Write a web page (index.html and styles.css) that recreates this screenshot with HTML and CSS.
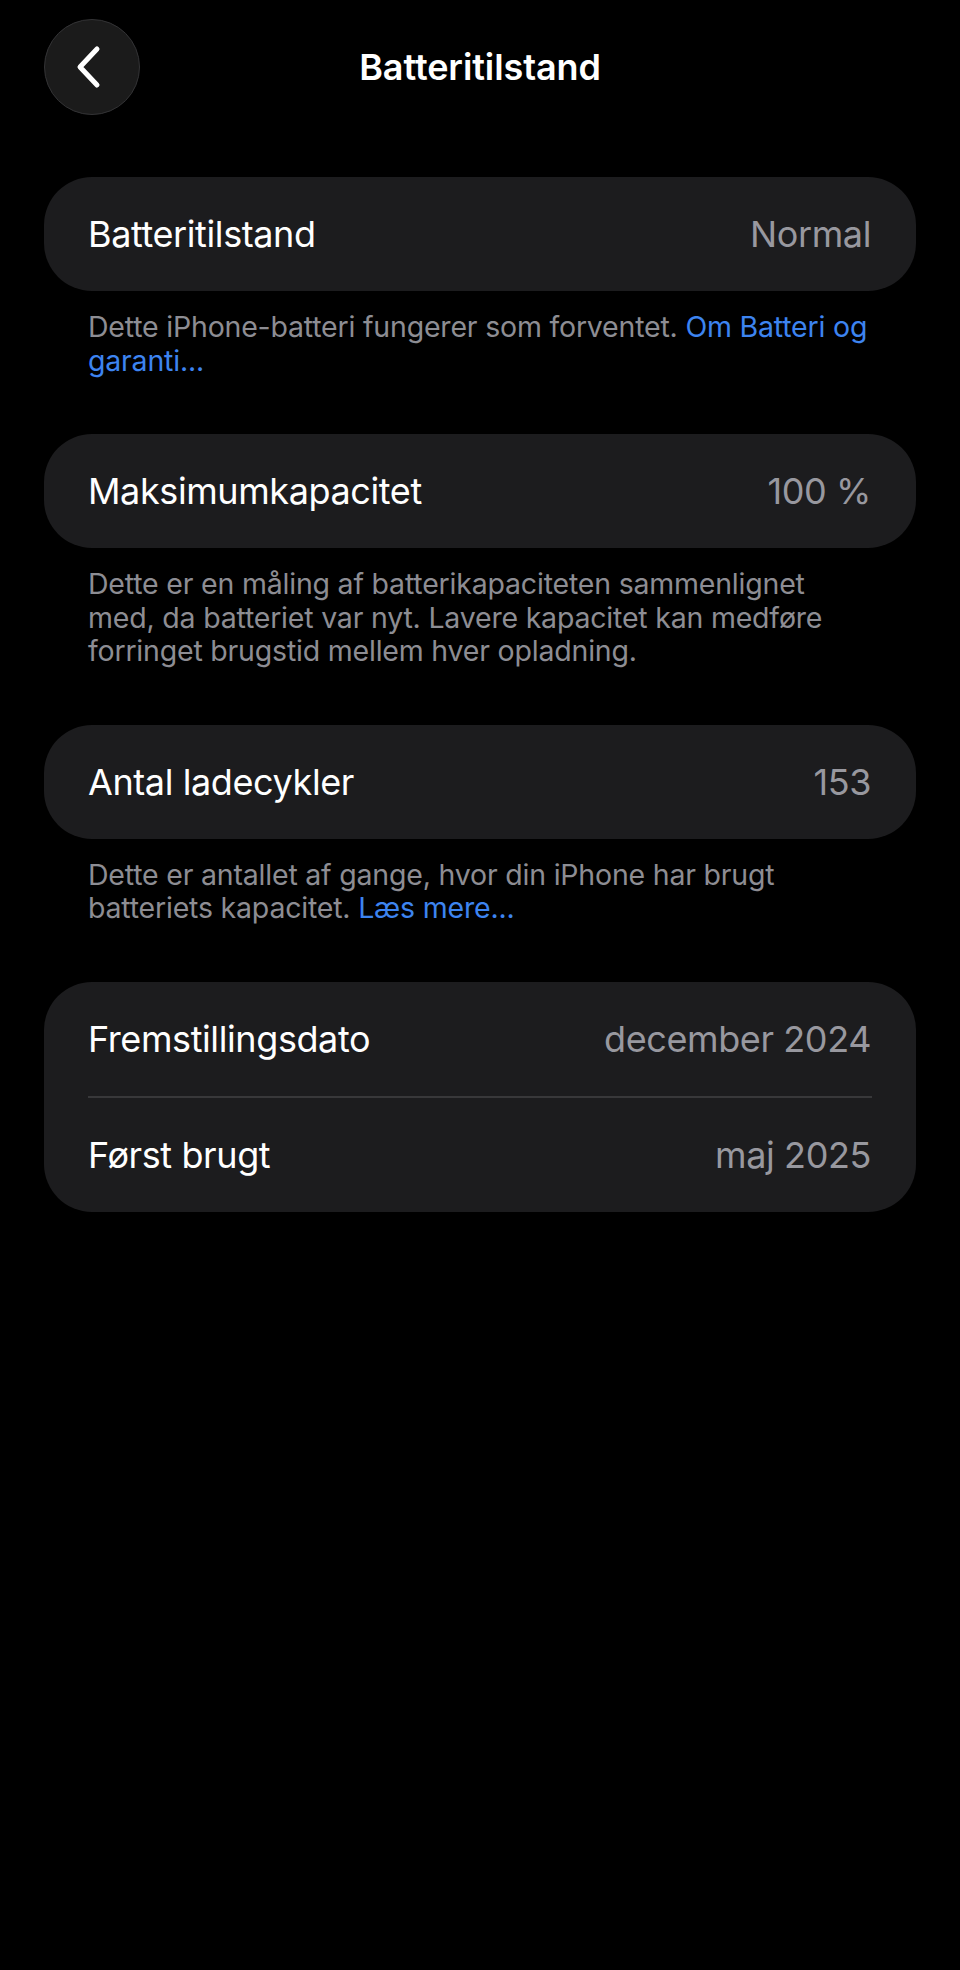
FILE: index.html
```html
<!DOCTYPE html>
<html lang="da">
<head>
    <meta charset="UTF-8">
    <title>Batteritilstand</title>
    <meta name="viewport" content="width=device-width, initial-scale=1">
    <link rel="stylesheet" href="styles.css">
</head>
<body>
<div class="page">
    <div class="topbar">
        <a class="back" href="#">
            <svg width="30" height="44" viewBox="0 0 30 44">
                <path d="M23 4 L6 22 L23 40" fill="none" stroke="#fff" stroke-width="5" stroke-linecap="round" stroke-linejoin="round"/>
            </svg>
        </a>
        <div class="title">Batteritilstand</div>
        <div></div>
    </div>

    <div class="card first">
        <div class="row">
            <span class="label">Batteritilstand</span>
            <span class="value">Normal</span>
        </div>
    </div>
    <p class="note">Dette iPhone-batteri fungerer som forventet. <a href="#">Om Batteri og<br>garanti...</a></p>

    <div class="card">
        <div class="row">
            <span class="label">Maksimumkapacitet</span>
            <span class="value">100 %</span>
        </div>
    </div>
    <p class="note">Dette er en måling af batterikapaciteten sammenlignet<br>med, da batteriet var nyt. Lavere kapacitet kan medføre<br>forringet brugstid mellem hver opladning.</p>

    <div class="card">
        <div class="row">
            <span class="label">Antal ladecykler</span>
            <span class="value">153</span>
        </div>
    </div>
    <p class="note">Dette er antallet af gange, hvor din iPhone har brugt<br>batteriets kapacitet. <a href="#">Læs mere...</a></p>

    <div class="card">
        <div class="row">
            <span class="label">Fremstillingsdato</span>
            <span class="value">december 2024</span>
        </div>
        <div class="divider"></div>
        <div class="row">
            <span class="label">Først brugt</span>
            <span class="value">maj 2025</span>
        </div>
    </div>
</div>
</body>
</html>
```

FILE: styles.css
```css
body{
    margin: 0;
    background: #000;
    color: #fff;
    font-family: Inter, "Noto Sans", sans-serif;
}
.page{
    padding: 19px 44px 0;
}
.topbar{
    display: grid;
    grid-template-columns: 96px 1fr 96px;
    align-items: center;
    height: 96px;
}
.back{
    width: 94px;
    height: 94px;
    border-radius: 50%;
    background: #1b1b1b;
    border: 1px solid #333335;
    display: flex;
    align-items: center;
    justify-content: center;
}
.back svg{
    margin-left: -6px;
}
.title{
    text-align: center;
    font-size: 36px;
    font-weight: 600;
    letter-spacing: -0.1px;
}
.card{
    background: #1c1c1e;
    border-radius: 48px;
}
.card.first{
    margin-top: 62px;
}
.row{
    height: 114px;
    padding: 0 45px 0 44px;
    display: flex;
    align-items: center;
    justify-content: space-between;
    font-size: 36px;
    letter-spacing: -0.4px;
}
.value{
    color: #98989f;
}
.divider{
    height: 2px;
    margin: 0 44px;
    background: #38383a;
}
.note{
    margin: 19px 0 57px;
    padding: 0 45px 0 44px;
    font-size: 28.5px;
    line-height: 33.5px;
    color: #8d8d93;
    letter-spacing: -0.2px;
    white-space: nowrap;
}
.note a{
    color: #3d84f0;
    text-decoration: none;
}
```
